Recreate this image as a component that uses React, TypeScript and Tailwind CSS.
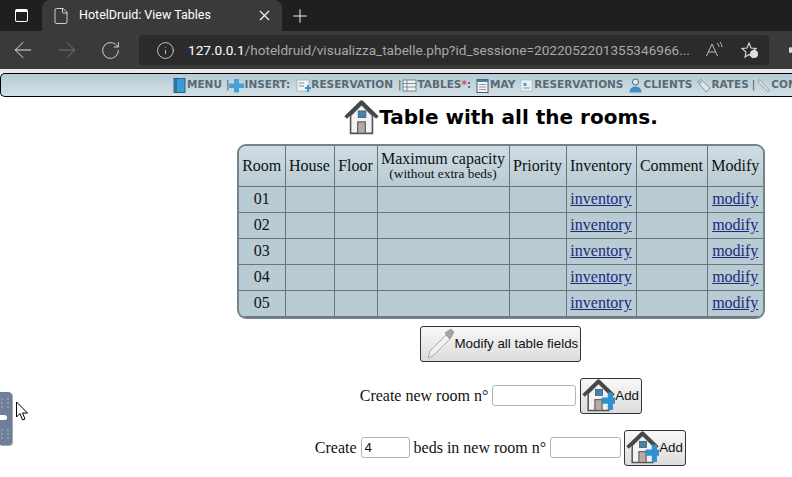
import React from 'react';
import { ArrowLeft, ArrowRight, RotateCw, Info, X, Plus, File } from 'lucide-react';

const rooms = ['01', '02', '03', '04', '05'];
const columns = [
  { label: 'Room', width: 'w-[46px]' },
  { label: 'House', width: 'w-[49px]' },
  { label: 'Floor', width: 'w-[43px]' },
  { label: 'Maximum capacity', width: 'w-[132px]' },
  { label: 'Priority', width: 'w-[57px]' },
  { label: 'Inventory', width: 'w-[70px]' },
  { label: 'Comment', width: 'w-[71px]' },
  { label: 'Modify', width: 'w-[56px]' },
];

// Small drawings for the hotel menu bar
const menuIcons: Record<string, React.ReactNode> = {
  book: (
    <>
      <rect x="2" y="0.5" width="11" height="14" fill="#3d9ad6" stroke="#2d5f80" strokeWidth="1" />
      <path d="M4 1v13" stroke="#1f4560" strokeWidth="1" />
    </>
  ),
  form: (
    <>
      <rect x="1" y="2" width="12" height="11" fill="#eef3f5" stroke="#9fb0b8" strokeWidth="0.8" />
      <path d="M3 5h5M3 8h5" stroke="#7d8f98" strokeWidth="1" />
      <path d="M9 9h2v-2h2v2h2v2h-2v3h-2v-3h-2Z" fill="#3f93cf" />
    </>
  ),
  tables: (
    <>
      <rect x="1" y="2" width="13" height="11" fill="#f0f3f4" stroke="#6d7a80" strokeWidth="0.9" />
      <path d="M1 5.5h13M1 9h13M5 2v11" stroke="#6d7a80" strokeWidth="0.8" />
    </>
  ),
  month: (
    <>
      <rect x="2" y="1.5" width="11" height="13" fill="#f2f5f6" stroke="#4c5d66" strokeWidth="1" />
      <rect x="2" y="1.5" width="11" height="2.5" fill="#4a7f9c" />
      <path d="M4 6.5h7M4 9h7M4 11.5h7" stroke="#7d8f98" strokeWidth="0.9" />
    </>
  ),
  list: (
    <>
      <rect x="2" y="2" width="11" height="11" fill="#eaf0f2" stroke="#9fb0b8" strokeWidth="0.8" strokeDasharray="1.5 1" />
      <rect x="4.5" y="5" width="3" height="3" fill="#5a9cc0" />
      <path d="M4.5 10h6" stroke="#7d8f98" strokeWidth="1" />
    </>
  ),
  person: (
    <>
      <circle cx="7.5" cy="4" r="3" fill="#e6ecef" stroke="#33424a" strokeWidth="0.8" />
      <path d="M1.5 14.5c0-4 2.5-6 6-6s6 2 6 6Z" fill="#3f8fc6" />
    </>
  ),
  tag: (
    <>
      <path d="M1.5 4 L5 1.5 L14 10 L10 14 Z" fill="#dfe6e9" stroke="#7d8b92" strokeWidth="0.9" />
      <circle cx="4.5" cy="4.5" r="1" fill="#7d8b92" />
    </>
  ),
  wrench: <path d="M2 3 L4 1.5 L6 4 L13.5 12.5 L12 14 L4.5 6 Z" fill="#e6eaec" stroke="#87949a" strokeWidth="0.9" />,
};

// House drawing used by the title and the Add buttons
const HouseIcon = ({ size, plus }: { size: number; plus?: boolean }) => (
  <svg width={size} height={size} viewBox="0 0 32 32" className="shrink-0">
    <path d="M6 14 L6 30.5 L26 30.5 L26 14 L16 4 Z" fill="#f2f2f2" stroke="#555" strokeWidth="1.5" />
    <path d="M1.5 16 L16 2 L30.5 16" fill="none" stroke="#474747" strokeWidth="3.4" strokeLinejoin="round" />
    <rect x="13" y="10" width="7" height="6" fill="#3f86a8" stroke="#3a5a6a" strokeWidth="0.7" />
    <rect x="12.5" y="20" width="7" height="10.5" fill="#b5aaa0" stroke="#555" strokeWidth="1" />
    {plus && <path d="M19 18 h6 v-5 h5 v5 h2 v6 h-2 v6 h-5 v-6 h-6 Z" fill="#2f8fcf" />}
  </svg>
);

const MenuItem = ({ label, icon, star, sep, className }: { label: string; icon: string; star?: boolean; sep?: boolean; className?: string }) => (
  <span className={`flex items-center shrink-0 ${className ?? ''}`}>
    {sep && <span className="mr-px font-normal text-[#555]">|</span>}
    <svg width="15" height="15" viewBox="0 0 15 15" className="shrink-0">
      {menuIcons[icon]}
    </svg>
    <span>{label}</span>
    {star && <span className="text-[#e0484f]">*</span>}
    {star && <span>:</span>}
  </span>
);

function AddButton({ className }: { className: string }) {
  return (
    <button className={`h-[36px] w-[62px] flex items-center rounded-[3px] border border-[#333] bg-gradient-to-b from-[#f8f8f8] to-[#dcdcdc] pl-px font-['Liberation_Sans',sans-serif] text-[13.33px] text-[#111] ${className}`}>
      <HouseIcon size={33} plus />
      Add
    </button>
  );
}

export default function App() {
  return (
    <div className="relative w-[792px] h-[477px] overflow-hidden bg-white">
      {/* Browser tab strip */}
      <div className="h-[31px] flex bg-[#1f1f1f] text-white">
        <div className="w-[42px] flex items-center justify-center">
          <div className="w-[13px] h-[13px] rounded-[2px] border-[1.5px] border-white border-t-[3px]" />
        </div>
        <div className="w-[240px] flex items-center rounded-t-lg bg-[#3a3a3a] pl-[10px] pr-[9px] font-['Roboto',sans-serif] text-[12.5px]">
          <File size={18} strokeWidth={1} className="shrink-0" />
          <span className="ml-[9px] whitespace-nowrap">HotelDruid: View Tables</span>
          <X size={17} strokeWidth={1.5} className="ml-auto" />
        </div>
        <div className="ml-[7px] flex items-center">
          <Plus size={22} strokeWidth={1} />
        </div>
      </div>

      {/* Address bar */}
      <div className="h-[38px] flex items-center bg-[#3a3a3a] text-[#e6e6e6]">
        <ArrowLeft size={26} strokeWidth={0.9} className="ml-[10px] shrink-0" />
        <ArrowRight size={26} strokeWidth={0.9} className="ml-[18px] shrink-0 text-[#777]" />
        <RotateCw size={21} strokeWidth={1} className="ml-[20px] shrink-0" />
        <div className="ml-[18px] w-[630px] h-[30px] flex items-center shrink-0 rounded bg-[#2b2b2b] pl-[17px] font-['Roboto',sans-serif] text-[13.6px]">
          <Info size={19} strokeWidth={1} className="shrink-0" />
          <span className="ml-[13px] whitespace-nowrap text-[#a8a8a8]">
            <span className="text-white">127.0.0.1</span>/hoteldruid/visualizza_tabelle.php?id_sessione=2022052201355346966...
          </span>
          <svg width="20" height="18" viewBox="0 0 20 18" className="ml-[15px] shrink-0" fill="none" stroke="#bbb" strokeWidth="1">
            <path d="M1.5 15 L7 3 L12.5 15 M3.5 11 H10.5" />
            <path d="M12 2 Q14 4 14 6 M15 1 Q17 3.5 17 6" />
          </svg>
          <svg width="20" height="18" viewBox="0 0 20 18" className="ml-[15px] shrink-0" fill="none" stroke="#ddd" strokeWidth="1.1">
            <path d="M9 2 L11 7 L16 7.5 L12 11 L13 16 L9 13.5 L5 16 L6 11 L2 7.5 L7 7 Z" />
            <circle cx="14" cy="13" r="3.5" fill="#ddd" />
          </svg>
        </div>
        <div className="ml-[20px] h-[6px] w-[3px] shrink-0 rounded-full bg-[#ddd]" />
      </div>

      {/* Hotel menu bar */}
      <div className="h-[4px] bg-[#e9e9e9]" />
      <div className="h-[24px] flex items-center overflow-hidden rounded-tl-[5px] rounded-bl-[5px] border-y border-l border-black bg-gradient-to-b from-[#b5cbd5] to-[#d3e0e5] pl-[171px] font-['DejaVu_Sans',sans-serif] text-[10.5px] font-bold whitespace-nowrap text-[#5b6a72]">
        <MenuItem label="MENU" icon="book" />
        <span className="ml-1 flex items-center shrink-0">
          <span className="font-normal text-[#555]">|</span>
          <svg width="15" height="15" viewBox="0 0 15 15"><path d="M5 1h5v4.5h5v4.5h-5v4.5h-5v-4.5h-5v-4.5h5Z" fill="#4a9fd8" /></svg>
          INSERT:
        </span>
        <MenuItem label="RESERVATION" icon="form" className="ml-[6px]" />
        <MenuItem label="TABLES" icon="tables" star sep className="ml-[5px]" />
        <MenuItem label="MAY" icon="month" className="ml-[4px]" />
        <MenuItem label="RESERVATIONS" icon="list" className="ml-[4px]" />
        <MenuItem label="CLIENTS" icon="person" className="ml-[5px]" />
        <MenuItem label="RATES" icon="tag" className="ml-[4px]" />
        <MenuItem label="CONFIGURE" icon="wrench" sep className="ml-[3px]" />
      </div>

      {/* Page body */}
      <div className="flex flex-col items-center pl-[210px] font-['Liberation_Serif',serif] text-base text-[#111]">
        <h1 className="mt-[2px] h-[36px] flex items-center font-['DejaVu_Sans',sans-serif] text-[20px] font-bold whitespace-nowrap text-black">
          <HouseIcon size={35} />
          Table with all the rooms.
        </h1>

        <div className="mt-[9px] overflow-hidden rounded-[9px] border-2 border-[#75828a] bg-[#b9cbd3]">
          <table className="w-[524px] table-fixed border-collapse">
            <thead>
              <tr className="h-[40px] bg-gradient-to-b from-[#cfdde3] to-[#b9cbd3]">
                {columns.map(col => (
                  <th key={col.label} className={`${col.width} border border-t-0 border-[#68757c] p-0 text-center font-normal leading-[16px] first:border-l-0 last:border-r-0`}>
                    {col.label}
                    {col.label === 'Maximum capacity' && (
                      <span className="block text-[13.33px] leading-[14px]">(without extra beds)</span>
                    )}
                  </th>
                ))}
              </tr>
            </thead>
            <tbody>
              {rooms.map(room => (
                <tr key={room} className="h-[26px]">
                  <td className="border border-l-0 border-[#68757c] p-0 text-center">{room}</td>
                  <td className="border border-[#68757c]" />
                  <td className="border border-[#68757c]" />
                  <td className="border border-[#68757c]" />
                  <td className="border border-[#68757c]" />
                  <td className="border border-[#68757c] p-0 text-center"><a href="#" className="text-[#1a2a80] underline">inventory</a></td>
                  <td className="border border-[#68757c]" />
                  <td className="border border-r-0 border-[#68757c] p-0 text-center"><a href="#" className="text-[#1a2a80] underline">modify</a></td>
                </tr>
              ))}
            </tbody>
          </table>
        </div>

        <button className="mt-[7px] mr-[2px] h-[36px] w-[161px] flex items-center rounded-[3px] border border-[#333] bg-gradient-to-b from-[#f8f8f8] to-[#dcdcdc] pl-[4px] font-['Liberation_Sans',sans-serif] text-[13.33px] whitespace-nowrap text-[#111]">
          <svg width="30" height="32" viewBox="0 0 30 32" className="shrink-0">
            <path d="M3 30 L5 23 L21 7 L25 11 L9 27 Z" fill="#f0f0f0" stroke="#a9a9a9" strokeWidth="1" />
            <path d="M20 5 L26 1 L29 4 L25 11 Z" fill="#9fa7aa" stroke="#8a9295" strokeWidth="0.8" />
          </svg>
          Modify all table fields
        </button>

        <div className="mt-[16px] h-[36px] flex items-center">
          Create new room n°
          <input className="ml-[4px] h-[21px] w-[84px] rounded-[3px] border border-[#b5b5b5] bg-white" />
          <AddButton className="ml-[4px]" />
        </div>

        <div className="mt-[16px] mr-[1px] h-[36px] flex items-center">
          Create
          <input defaultValue="4" className="mx-[4px] h-[21px] w-[49px] rounded-[3px] border border-[#b5b5b5] bg-white pl-[3px] font-['Liberation_Sans',sans-serif] text-[13.33px]" />
          beds in new room n°
          <input className="ml-[4px] h-[21px] w-[71px] rounded-[3px] border border-[#b5b5b5] bg-white" />
          <AddButton className="ml-[3px]" />
        </div>
      </div>

      {/* Side handle stuck on the left edge */}
      <div className="absolute left-0 top-[392px] h-[53px] w-[12px] rounded-r-[4px] bg-[#6f7f99] shadow-[1px_1px_0_#a8a8a8]">
        <div className="mt-[6px] grid w-[10px] grid-cols-2 gap-[2px] pl-px">
          {[0, 1, 2, 3, 4, 5].map(i => <span key={i} className="h-[2px] w-[2px] bg-[#8d9ab0]" />)}
        </div>
        <div className="absolute left-0 top-[23px] h-[5px] w-[7px] rounded-r-full bg-white" />
        <div className="absolute left-px bottom-[6px] grid w-[10px] grid-cols-2 gap-[2px]">
          {[0, 1, 2, 3, 4, 5].map(i => <span key={i} className="h-[2px] w-[2px] bg-[#8d9ab0]" />)}
        </div>
      </div>

      {/* Mouse pointer */}
      <svg width="14" height="21" viewBox="0 0 14 21" className="absolute left-[15px] top-[401px]">
        <path d="M1.5 1 L1.5 16 L5 12.5 L7.5 19 L10 18 L7.5 12 L12.5 12 Z" fill="#fff" stroke="#000" strokeWidth="1" />
      </svg>
    </div>
  );
}
